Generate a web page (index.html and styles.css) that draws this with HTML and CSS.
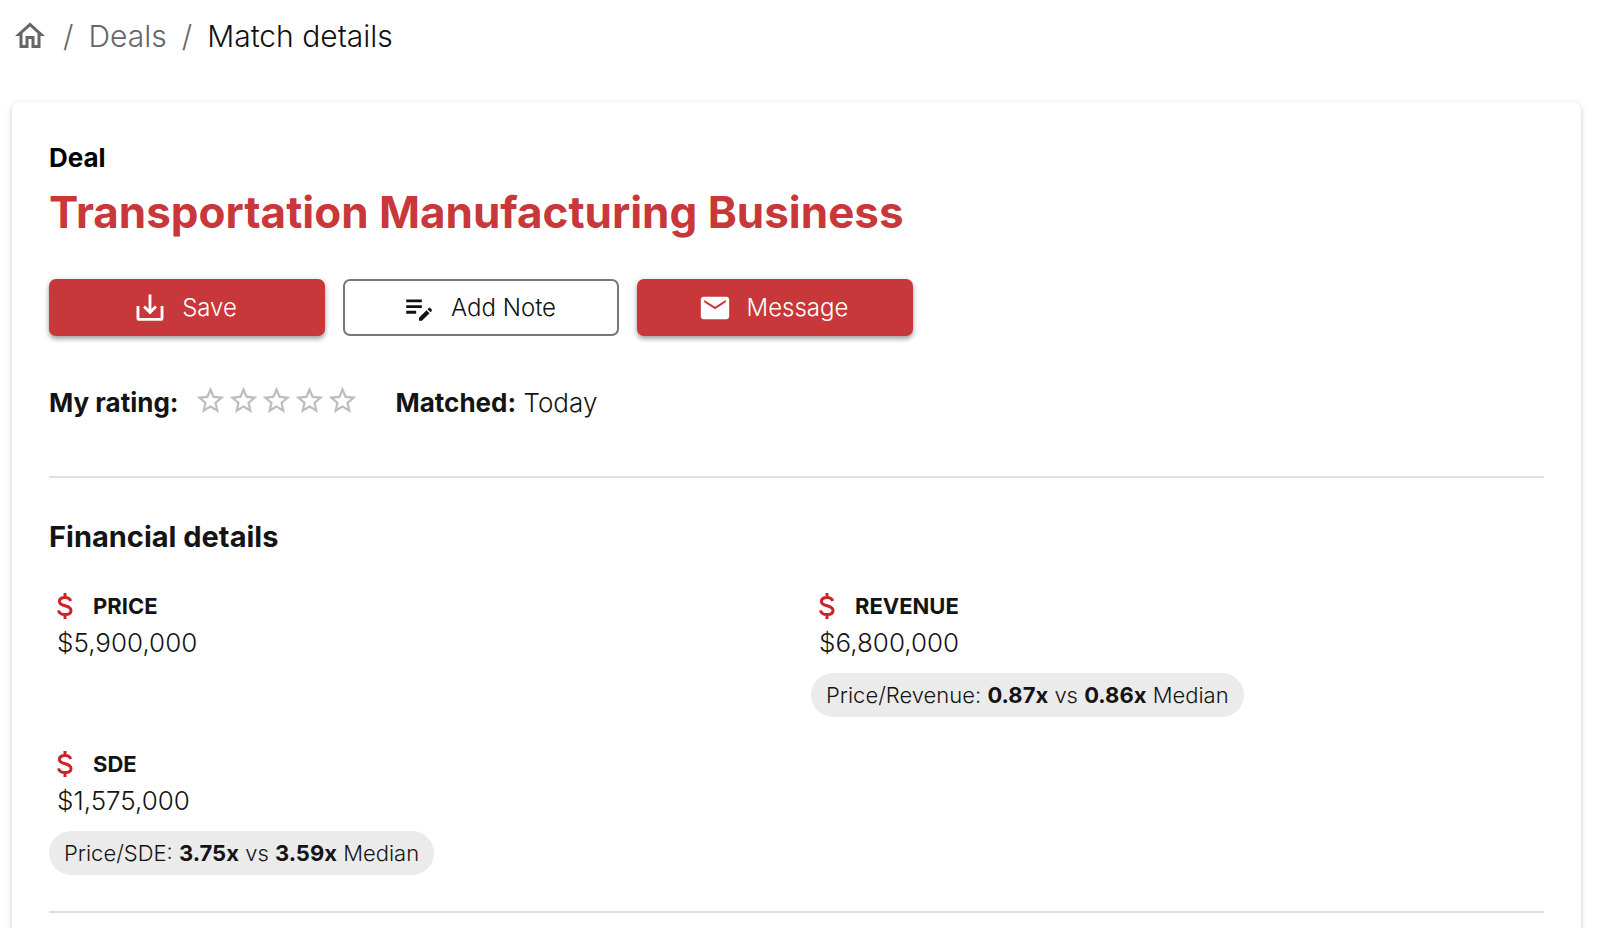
FILE: index.html
```
<!DOCTYPE html>
<html lang="en">
	<head>
		<meta charset="UTF-8">
		<title>Match details</title>
		<link rel="stylesheet" href="styles.css">
	</head>
	<body>
		<!-- shared shapes -->
		<svg class="sprite" aria-hidden="true">
			<symbol id="star" viewBox="0 0 24 24">
				<path d="M22 9.24l-7.19-.62L12 2 9.19 8.63 2 9.24l5.46 4.73L5.82 21 12 17.27 18.18 21l-1.63-7.03L22 9.24zM12 15.4l-3.76 2.27 1-4.28-3.32-2.88 4.38-.38L12 6.1l1.71 4.04 4.38.38-3.32 2.88 1 4.28L12 15.4z"/>
			</symbol>
			<symbol id="dollar" viewBox="0 0 16 26">
				<path d="M13.6 8C13 5.700 11 4.500 8 4.500c-3.300 0-5.600 1.500-5.600 4 0 5.800 11.600 2.800 11.600 9 0 2.600-2.400 4.100-6 4.100-3.600 0-6-1.500-6.400-4.200M8 0v4.500M8 21.500V26"/>
			</symbol>
		</svg>

		<nav class="crumbs" aria-label="Breadcrumb">
			<a href="#" class="home" aria-label="Home">
				<svg viewBox="0 0 24 24"><path d="M12 5.690l5 4.500V18h-2v-6H9v6H7v-7.810l5-4.500M12 3L2 12h3v8h6v-6h2v6h6v-8h3L12 3z"/></svg>
			</a>
			<span>/</span>
			<a href="#">Deals</a>
			<span>/</span>
			<span class="current">Match details</span>
		</nav>

		<main class="card">
			<p class="kind">Deal</p>
			<h1>Transportation Manufacturing Business</h1>

			<div class="actions">
				<button type="button" class="btn red">
					<svg viewBox="0 0 24 24" class="line"><path d="M12 2.500v12M7.800 11l4.200 4.200 4.200-4.200M3.500 10.500v8.500q0 1 1 1h15q1 0 1-1v-8.500"/></svg>
					Save
				</button>
				<button type="button" class="btn">
					<svg viewBox="0 0 24 24"><path d="M3 10h11v2H3v-2zm0-2h11V6H3v2zm0 8h7v-2H3v2zm15.010-3.130.71-.71c.39-.39 1.020-.39 1.410 0l.71.71c.39.39.39 1.020 0 1.410l-.71.71-2.120-2.120zm-.71.71-5.300 5.300V21h2.120l5.300-5.300-2.120-2.120z"/></svg>
					Add Note
				</button>
				<button type="button" class="btn red">
					<svg viewBox="0 0 24 24"><path d="M20 4H4c-1.100 0-2 .9-2 2v12c0 1.100.9 2 2 2h16c1.100 0 2-.9 2-2V6c0-1.100-.9-2-2-2zm-.4 4L12 12.900 4.400 8V6.300L12 11.100l7.600-4.800V8z"/></svg>
					Message
				</button>
			</div>

			<div class="meta">
				<strong id="rating">My rating:</strong>
				<div class="stars" role="radiogroup" aria-labelledby="rating">
					<label><input type="radio" name="rating" value="1" aria-label="1 star"><svg><use href="#star"/></svg></label>
					<label><input type="radio" name="rating" value="2" aria-label="2 stars"><svg><use href="#star"/></svg></label>
					<label><input type="radio" name="rating" value="3" aria-label="3 stars"><svg><use href="#star"/></svg></label>
					<label><input type="radio" name="rating" value="4" aria-label="4 stars"><svg><use href="#star"/></svg></label>
					<label><input type="radio" name="rating" value="5" aria-label="5 stars"><svg><use href="#star"/></svg></label>
				</div>
				<p><strong>Matched:</strong> Today</p>
			</div>

			<section class="financial">
				<h2>Financial details</h2>
				<div class="grid">
					<div class="item">
						<h3><svg><use href="#dollar"/></svg>PRICE</h3>
						<p class="value">$5,900,000</p>
					</div>
					<div class="item">
						<h3><svg><use href="#dollar"/></svg>REVENUE</h3>
						<p class="value">$6,800,000</p>
						<p class="chip">Price/Revenue: <b>0.87x</b> vs <b>0.86x</b> Median</p>
					</div>
					<div class="item">
						<h3><svg><use href="#dollar"/></svg>SDE</h3>
						<p class="value">$1,575,000</p>
						<p class="chip">Price/SDE: <b>3.75x</b> vs <b>3.59x</b> Median</p>
					</div>
				</div>
			</section>
		</main>
	</body>
</html>
```
FILE: styles.css
```
* {
	margin: 0;
	padding: 0;
	box-sizing: border-box;
}

body {
	background: #fff;
	color: #141414;
	font-family: Inter, "Liberation Sans", sans-serif;
	font-size: 26px;
	font-weight: 300;
	line-height: 36px;
}

a {
	color: inherit;
	text-decoration: none;
}

strong, b {
	font-weight: 700;
}

.sprite {
	display: none;
}

/* breadcrumb */
.crumbs {
	display: flex;
	align-items: center;
	gap: 15px;
	padding: 18px 12px;
	color: #666;
	font-size: 30px;
}

.home svg {
	display: block;
	width: 36px;
	height: 36px;
	fill: #666;
}

.crumbs .current {
	color: #111;
}

/* card */
.card {
	margin: 30px 19px 0 12px;
	padding: 38px 37px 60px;
	border-radius: 8px;
	background: #fff;
	box-shadow: 0 2px 4px rgba(0, 0, 0, 0.16), 0 1px 8px rgba(0, 0, 0, 0.08);
}

.kind {
	color: #000;
	font-weight: 700;
}

h1 {
	margin-top: 8px;
	color: #c8373a;
	font-size: 44px;
	font-weight: 700;
	line-height: 56px;
}

.actions {
	display: flex;
	gap: 18px;
	margin-top: 39px;
}

.btn {
	display: flex;
	align-items: center;
	justify-content: center;
	gap: 15px;
	width: 276px;
	height: 57px;
	padding-right: 4px;
	border: 2px solid #777;
	border-radius: 7px;
	background: #fff;
	color: #111;
	font: inherit;
	font-size: 24px;
}

.btn svg {
	width: 34px;
	height: 34px;
	fill: currentColor;
}

.btn .line {
	fill: none;
	stroke: currentColor;
	stroke-width: 2;
}

.btn.red {
	border: none;
	background: #c8373a;
	color: #fff;
	box-shadow: 0 3px 4px rgba(0, 0, 0, 0.3), 0 1px 8px rgba(0, 0, 0, 0.12);
}

.meta {
	display: flex;
	align-items: center;
	margin-top: 48px;
}

.stars {
	display: flex;
	margin: 0 37px 4px 15px;
}

.stars label {
	position: relative;
	cursor: pointer;
}

.stars input {
	position: absolute;
	opacity: 0;
}

.stars svg {
	display: block;
	width: 33px;
	height: 33px;
	fill: #bdbdbd;
}

/* financial details */
.financial {
	margin-top: 55px;
	padding: 39px 0 36px;
	border-top: 2px solid #e0e0e0;
	border-bottom: 2px solid #e0e0e0;
}

h2 {
	font-size: 29px;
	font-weight: 700;
	line-height: 40px;
}

.grid {
	display: grid;
	grid-template-columns: 1fr 1fr;
	gap: 29px;
	margin-top: 31px;
}

.item h3 {
	display: flex;
	align-items: center;
	gap: 20px;
	padding-left: 8px;
	font-size: 22px;
	font-weight: 700;
}

.item h3 svg {
	width: 16px;
	height: 26px;
	fill: none;
	stroke: #cc2229;
	stroke-width: 3;
}

.value {
	padding-left: 8px;
	line-height: 38px;
}

.chip {
	width: fit-content;
	margin-top: 11px;
	padding: 0 15px;
	border-radius: 22px;
	background: #ebebeb;
	font-size: 22px;
	line-height: 44px;
}
```
